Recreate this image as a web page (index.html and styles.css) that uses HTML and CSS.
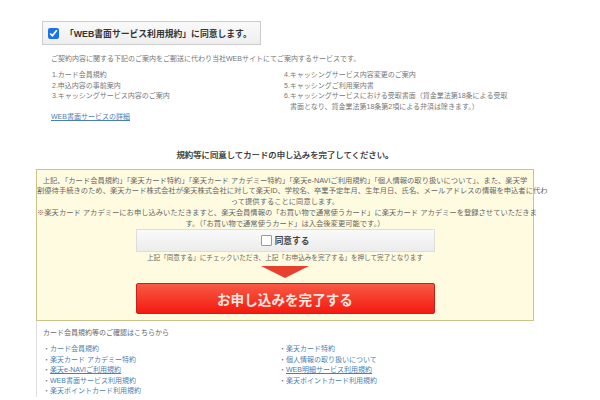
FILE: index.html
```html
<!DOCTYPE html>
<html lang="ja">
<head>
  <meta charset="UTF-8" />
  <title>お申し込みの完了</title>
  <link rel="stylesheet" href="styles.css">
</head>
<body>
  <div class="container">
    <!-- WEB statement consent -->
    <label class="agree-top">
      <input type="checkbox" checked />
      <span>「WEB書面サービス利用規約」に同意します。</span>
    </label>

    <p class="intro">ご契約内容に関する下記のご案内をご郵送に代わり当社WEBサイトにてご案内するサービスです。</p>

    <div class="service-list">
      <ul>
        <li>1.カード会員規約</li>
        <li>2.申込内容の事前案内</li>
        <li>3.キャッシングサービス内容のご案内</li>
      </ul>
      <ul>
        <li>4.キャッシングサービス内容変更のご案内</li>
        <li>5.キャッシングご利用案内書</li>
        <li class="indent">6.キャッシングサービスにおける受取書面（貸金業法第18条による受取<br>書面となり、貸金業法第18条第2項による弁済は除きます。）</li>
      </ul>
    </div>

    <a class="detail-link" href="#">WEB書面サービスの詳細</a>

    <h2 class="lead">規約等に同意してカードの申し込みを完了してください。</h2>

    <div class="confirm-box">
      <p class="terms">上記、「カード会員規約」「楽天カード特約」「楽天カード アカデミー特約」「楽天e-NAVIご利用規約」「個人情報の取り扱いについて」、また、楽天学<br>割優待手続きのため、楽天カード株式会社が楽天株式会社に対して楽天ID、学校名、卒業予定年月、生年月日、氏名、メールアドレスの情報を申込者に代わ<br>って提供することに同意します。</p>
      <p class="terms second">※楽天カード アカデミーにお申し込みいただきますと、楽天会員情報の「お買い物で通常使うカード」に楽天カード アカデミーを登録させていただきま<br>す。（「お買い物で通常使うカード」は入会後変更可能です。）</p>

      <label class="agree-main">
        <span class="check"></span>
        <span>同意する</span>
      </label>
      <p class="note">上記「同意する」にチェックいただき、上記「お申込みを完了する」を押して完了となります</p>
      <div class="arrow"></div>
      <button class="submit" type="button">お申し込みを完了する</button>
    </div>

    <div class="links">
      <p class="links-title">カード会員規約等のご確認はこちらから</p>
      <div class="link-cols">
        <ul>
          <li><a href="#">カード会員規約</a></li>
          <li><a href="#">楽天カード アカデミー特約</a></li>
          <li><a class="over" href="#">楽天e-NAVIご利用規約</a></li>
          <li><a href="#">WEB書面サービス利用規約</a></li>
          <li><a href="#">楽天ポイントカード利用規約</a></li>
        </ul>
        <ul>
          <li><a href="#">楽天カード特約</a></li>
          <li><a href="#">個人情報の取り扱いについて</a></li>
          <li><a class="over" href="#">WEB明細サービス利用規約</a></li>
          <li><a href="#">楽天ポイントカード利用規約</a></li>
        </ul>
      </div>
    </div>
  </div>
</body>
</html>
```

FILE: styles.css
```css
html, body {
  height: 400px;
  overflow: hidden;
}

body {
  margin: 0;
  background-color: #fff;
  font-family: 'Liberation Sans', 'Noto Sans CJK JP', sans-serif;
  font-size: 7px;
  color: #777;
}

ul {
  list-style: none;
  margin: 0;
  padding: 0;
}

p {
  margin: 0;
}

a {
  color: #4a7fb0;
  text-decoration: none;
}

.container {
  width: 498px;
  margin-left: 36px;
  padding-top: 21px;
}

.agree-top {
  display: flex;
  align-items: center;
  gap: 6px;
  width: 217px;
  height: 22px;
  margin-left: 6px;
  background: linear-gradient(#fafafa, #eee);
  border: 1px solid #ccc;
  box-sizing: content-box;
  font-size: 8.8px;
  font-weight: bold;
  color: #333;
}

.agree-top input {
  width: 11px;
  height: 11px;
  margin: 0 0 0 5px;
  accent-color: #1a73e8;
}

.intro {
  margin: 9px 0 0 15px;
  line-height: 10px;
}

.service-list {
  display: flex;
  margin: 6px 0 0 16px;
  line-height: 10.5px;
}

.service-list ul {
  width: 232px;
}

.service-list li {
  white-space: nowrap;
}

.service-list .indent {
  padding-left: 6px;
  text-indent: -6px;
}

.detail-link {
  display: block;
  margin: 0 0 0 15px;
  line-height: 10px;
  text-decoration: underline;
}

.lead {
  margin: 28px 0 0;
  font-size: 8.4px;
  font-weight: normal;
  line-height: 10px;
  text-align: center;
  color: #222;
  -webkit-text-stroke: 0.2px #222;
}

.confirm-box {
  margin-top: 9px;
  padding: 6px 0 0;
  height: 144px;
  background-color: #fffbe0;
  border: 1px solid #c9c48a;
  text-align: center;
}

.terms {
  font-size: 7.3px;
  line-height: 10.4px;
  white-space: nowrap;
  color: #666;
}

.terms.second {
  margin-top: 1px;
}

.agree-main {
  display: flex;
  align-items: center;
  justify-content: center;
  gap: 3px;
  width: 299px;
  height: 23px;
  margin: 0 auto;
  background: linear-gradient(#fafafa, #ececec);
  border: 1px solid #ddd;
  box-sizing: border-box;
  font-size: 8.7px;
  font-weight: bold;
  color: #444;
}

.check {
  width: 9px;
  height: 9px;
  background-color: #fff;
  border: 1px solid #999;
  border-radius: 1px;
}

.note {
  margin-top: 1px;
  line-height: 10px;
  font-size: 6.6px;
  color: #666;
}

.arrow {
  width: 0;
  height: 0;
  margin: 3px auto 0;
  border-left: 24px solid transparent;
  border-right: 24px solid transparent;
  border-top: 12px solid #e8402f;
}

.submit {
  display: block;
  width: 299px;
  height: 31px;
  margin: 5px auto 0;
  padding: 0;
  background: linear-gradient(#f85a45, #f41a10);
  border: 1px solid #c8201a;
  border-radius: 2px;
  font-family: inherit;
  font-size: 13.6px;
  font-weight: bold;
  color: #fde8e0;
}

.links {
  padding: 6px 0 0 6px;
  border-left: 1px solid #ddd;
}

.links-title {
  line-height: 11px;
  color: #666;
}

.link-cols {
  display: flex;
  margin-top: 6px;
  line-height: 10.6px;
}

.link-cols ul {
  width: 236px;
}

.link-cols li::before {
  content: '・';
  display: inline-block;
  width: 7px;
  color: #777;
}

.link-cols .over {
  text-decoration: underline;
}
```
